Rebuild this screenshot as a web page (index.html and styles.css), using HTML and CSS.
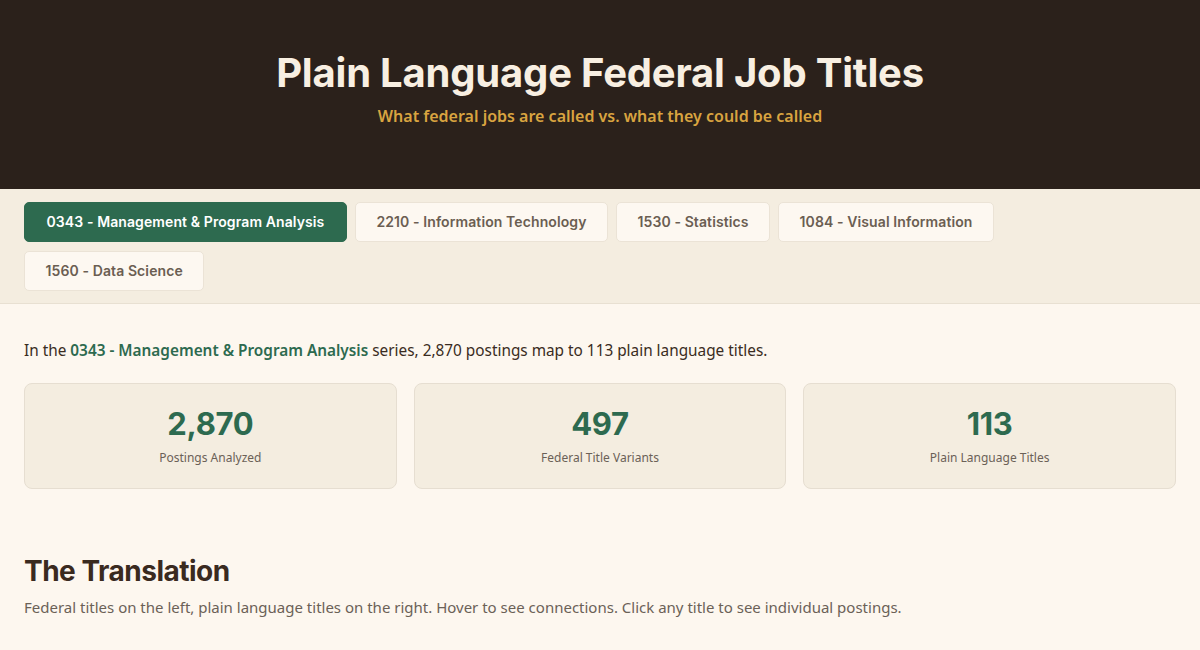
FILE: index.html
```html
<!DOCTYPE html>
<html lang="en">
<head>
<meta charset="utf-8">
<title>Plain Language Federal Job Titles</title>
<link rel="stylesheet" href="styles.css">
</head>
<body>
<header class="hero">
  <h1 class="hero-title">Plain Language Federal Job Titles</h1>
  <p class="hero-sub">What federal jobs are called vs. what they could be called</p>
</header>

<nav class="tabs">
  <button class="tab tab-active">0343 - Management &amp; Program Analysis</button>
  <button class="tab">2210 - Information Technology</button>
  <button class="tab">1530 - Statistics</button>
  <button class="tab">1084 - Visual Information</button>
  <button class="tab">1560 - Data Science</button>
</nav>

<main class="content">
  <p class="summary">In the <span class="series">0343 - Management &amp; Program Analysis</span> series, 2,870 postings map to 113 plain language titles.</p>

  <div class="stats">
    <div class="stat">
      <div class="stat-num">2,870</div>
      <div class="stat-label">Postings Analyzed</div>
    </div>
    <div class="stat">
      <div class="stat-num">497</div>
      <div class="stat-label">Federal Title Variants</div>
    </div>
    <div class="stat">
      <div class="stat-num">113</div>
      <div class="stat-label">Plain Language Titles</div>
    </div>
  </div>

  <section class="translation">
    <h2 class="section-title">The Translation</h2>
    <p class="section-desc">Federal titles on the left, plain language titles on the right. Hover to see connections. Click any title to see individual postings.</p>
  </section>
</main>
</body>
</html>
```
FILE: styles.css
```css
* { box-sizing: border-box; }
html, body { margin: 0; padding: 0; }
body {
  background: #fdf7ef;
  font-family: "Noto Sans", "Open Sans", sans-serif;
  color: #3a2c22;
}

.hero {
  background: #2b211b;
  padding: 49px 24px 61px;
  text-align: center;
}
.hero-title {
  margin: 0;
  font-family: Inter, "Noto Sans", sans-serif;
  font-weight: 700;
  font-size: 40px;
  line-height: 48px;
  letter-spacing: -0.2px;
  color: #f8efe2;
}
.hero-sub {
  margin: 7px 0 0;
  font-family: "Noto Sans", sans-serif;
  font-weight: 600;
  font-size: 16px;
  line-height: 24px;
  color: #d9a440;
}

.tabs {
  background: #f4ede0;
  border-bottom: 1px solid #e8e0d2;
  padding: 13px 24px 12px;
  display: flex;
  flex-wrap: wrap;
  gap: 9px 8px;
}
.tab {
  font-family: Inter, "Noto Sans", sans-serif;
  font-weight: 600;
  font-size: 14px;
  line-height: 20px;
  letter-spacing: 0.1px;
  padding: 9px 20.5px;
  border-radius: 5px;
  border: 1px solid #ebe3d6;
  background: #fdf8f1;
  color: #6b5e52;
  cursor: pointer;
}
.tab-active {
  background: #2d6a4f;
  border-color: #2d6a4f;
  color: #ffffff;
  padding: 9px 21.5px;
}

.content {
  padding: 34px 24px 40px;
}
.summary {
  margin: 0;
  font-size: 15.35px;
  line-height: 24px;
  color: #3a2c22;
}
.series {
  color: #2d6a4f;
  font-weight: 600;
}

.stats {
  margin-top: 21px;
  display: grid;
  grid-template-columns: repeat(3, 1fr);
  gap: 17px;
}
.stat {
  background: #f4ede0;
  border: 1px solid #e6ded1;
  border-radius: 8px;
  padding: 20px 16px 20px;
  text-align: center;
}
.stat-num {
  font-family: Inter, "Noto Sans", sans-serif;
  font-weight: 700;
  font-size: 31px;
  line-height: 40px;
  letter-spacing: -0.3px;
  color: #2d6a4f;
}
.stat-label {
  margin-top: 4px;
  font-size: 12px;
  line-height: 20px;
  color: #6b6157;
}

.translation {
  margin-top: 64px;
}
.section-title {
  margin: 0;
  font-family: Inter, "Noto Sans", sans-serif;
  font-weight: 700;
  font-size: 28px;
  line-height: 36px;
  letter-spacing: -0.5px;
  color: #3a2a1f;
}
.section-desc {
  margin: 6px 0 0;
  font-size: 15px;
  line-height: 24px;
  color: #6b6157;
}
```
